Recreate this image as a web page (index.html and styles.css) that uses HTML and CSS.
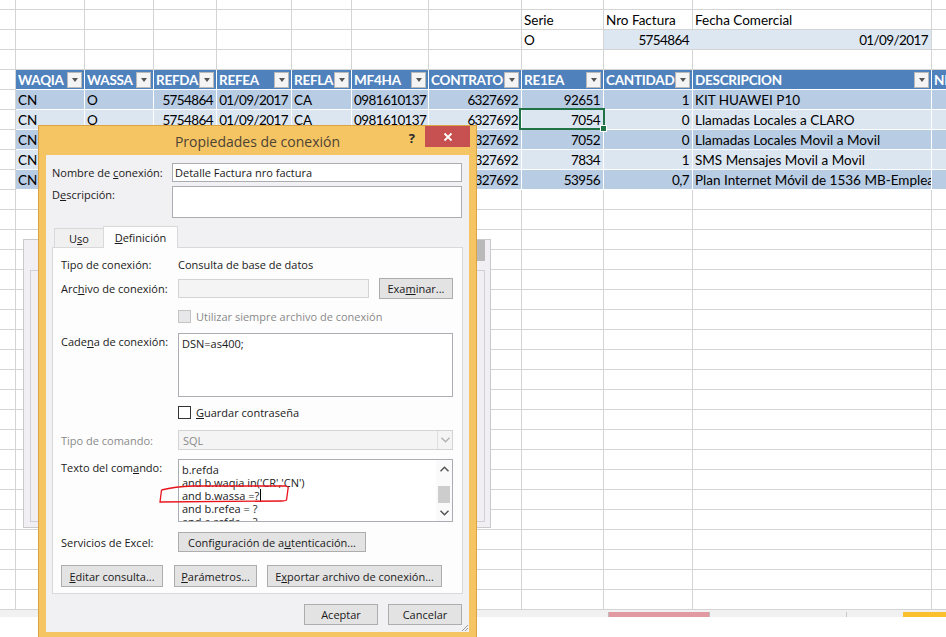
FILE: index.html
```html
<!DOCTYPE html>
<html lang="es">
<head>
<meta charset="utf-8">
<title>Propiedades de conexión</title>
<link rel="stylesheet" href="styles.css">
</head>
<body>
<div class="sheet">
  <div class="row top"><span></span><span></span><span></span><span></span><span></span><span></span><span></span><span></span><span></span><span></span><span></span><span></span></div>
  <div class="row"><span></span><span></span><span></span><span></span><span></span><span></span><span></span><span></span><span>Serie</span><span>Nro Factura</span><span>Fecha Comercial</span><span></span></div>
  <div class="row"><span></span><span></span><span></span><span></span><span></span><span></span><span></span><span></span><span>O</span><span class="n sh">5754864</span><span class="n sh">01/09/2017</span><span></span></div>
  <div class="row"><span></span><span></span><span></span><span></span><span></span><span></span><span></span><span></span><span></span><span></span><span></span><span></span></div>
  <div class="row hdr"><span></span><span><b>WAQIA</b><i class="fb"></i></span><span><b>WASSA</b><i class="fb"></i></span><span><b>REFDA</b><i class="fb"></i></span><span><b>REFEA</b><i class="fb"></i></span><span><b>REFLA</b><i class="fb"></i></span><span><b>MF4HA</b><i class="fb"></i></span><span><b>CONTRATO</b><i class="fb"></i></span><span><b>RE1EA</b><i class="fb"></i></span><span><b>CANTIDAD</b><i class="fb"></i></span><span><b>DESCRIPCION</b><i class="fb"></i></span><span><b>NRO</b></span></div>
  <div class="row d1"><span></span><span>CN</span><span>O</span><span class="n">5754864</span><span class="n">01/09/2017</span><span>CA</span><span class="t">0981610137</span><span class="n">6327692</span><span class="n">92651</span><span class="n">1</span><span>KIT HUAWEI P10</span><span></span></div>
  <div class="row d2"><span></span><span>CN</span><span>O</span><span class="n">5754864</span><span class="n">01/09/2017</span><span>CA</span><span class="t">0981610137</span><span class="n">6327692</span><span class="n">7054</span><span class="n">0</span><span>Llamadas Locales a CLARO</span><span></span></div>
  <div class="row d1"><span></span><span>CN</span><span>O</span><span class="n">5754864</span><span class="n">01/09/2017</span><span>CA</span><span class="t">0981610137</span><span class="n">6327692</span><span class="n">7052</span><span class="n">0</span><span>Llamadas Locales Movil a Movil</span><span></span></div>
  <div class="row d2"><span></span><span>CN</span><span>O</span><span class="n">5754864</span><span class="n">01/09/2017</span><span>CA</span><span class="t">0981610137</span><span class="n">6327692</span><span class="n">7834</span><span class="n">1</span><span>SMS Mensajes Movil a Movil</span><span></span></div>
  <div class="row d1"><span></span><span>CN</span><span>O</span><span class="n">5754864</span><span class="n">01/09/2017</span><span>CA</span><span class="t">0981610137</span><span class="n">6327692</span><span class="n">53956</span><span class="n">0,7</span><span>Plan Internet Móvil de 1536 MB-Empleados</span><span></span></div>
  <div class="row"><span></span><span></span><span></span><span></span><span></span><span></span><span></span><span></span><span></span><span></span><span></span><span></span></div>
  <div class="row"><span></span><span></span><span></span><span></span><span></span><span></span><span></span><span></span><span></span><span></span><span></span><span></span></div>
  <div class="row"><span></span><span></span><span></span><span></span><span></span><span></span><span></span><span></span><span></span><span></span><span></span><span></span></div>
  <div class="row"><span></span><span></span><span></span><span></span><span></span><span></span><span></span><span></span><span></span><span></span><span></span><span></span></div>
  <div class="row"><span></span><span></span><span></span><span></span><span></span><span></span><span></span><span></span><span></span><span></span><span></span><span></span></div>
  <div class="row"><span></span><span></span><span></span><span></span><span></span><span></span><span></span><span></span><span></span><span></span><span></span><span></span></div>
  <div class="row"><span></span><span></span><span></span><span></span><span></span><span></span><span></span><span></span><span></span><span></span><span></span><span></span></div>
  <div class="row"><span></span><span></span><span></span><span></span><span></span><span></span><span></span><span></span><span></span><span></span><span></span><span></span></div>
  <div class="row"><span></span><span></span><span></span><span></span><span></span><span></span><span></span><span></span><span></span><span></span><span></span><span></span></div>
  <div class="row"><span></span><span></span><span></span><span></span><span></span><span></span><span></span><span></span><span></span><span></span><span></span><span></span></div>
  <div class="row"><span></span><span></span><span></span><span></span><span></span><span></span><span></span><span></span><span></span><span></span><span></span><span></span></div>
  <div class="row"><span></span><span></span><span></span><span></span><span></span><span></span><span></span><span></span><span></span><span></span><span></span><span></span></div>
  <div class="row"><span></span><span></span><span></span><span></span><span></span><span></span><span></span><span></span><span></span><span></span><span></span><span></span></div>
  <div class="row"><span></span><span></span><span></span><span></span><span></span><span></span><span></span><span></span><span></span><span></span><span></span><span></span></div>
  <div class="row"><span></span><span></span><span></span><span></span><span></span><span></span><span></span><span></span><span></span><span></span><span></span><span></span></div>
  <div class="row"><span></span><span></span><span></span><span></span><span></span><span></span><span></span><span></span><span></span><span></span><span></span><span></span></div>
  <div class="row"><span></span><span></span><span></span><span></span><span></span><span></span><span></span><span></span><span></span><span></span><span></span><span></span></div>
  <div class="row"><span></span><span></span><span></span><span></span><span></span><span></span><span></span><span></span><span></span><span></span><span></span><span></span></div>
  <div class="row"><span></span><span></span><span></span><span></span><span></span><span></span><span></span><span></span><span></span><span></span><span></span><span></span></div>
  <div class="row"><span></span><span></span><span></span><span></span><span></span><span></span><span></span><span></span><span></span><span></span><span></span><span></span></div>
  <div class="row"><span></span><span></span><span></span><span></span><span></span><span></span><span></span><span></span><span></span><span></span><span></span><span></span></div>
</div>
<div class="tabbar"><span class="sheet-tab"></span><span class="tick"></span><span class="scroll-end"></span></div>

<div class="selection"><span class="handle"></span></div>

<div class="ghost"><span class="ghost-thumb"></span><div class="ghost-inner"></div></div>

<div class="dialog">
  <div class="titlebar">
    <span></span>
    <span class="title">Propiedades de conexión</span>
    <span class="caption-btns">
      <span class="help">?</span>
      <span class="close"><svg width="10" height="10" viewBox="0 0 10 10"><path d="M1.5 1.5L8.5 8.5M8.5 1.5L1.5 8.5" stroke="#fff" stroke-width="1.8" fill="none"/></svg></span>
    </span>
  </div>
  <div class="client">
    <div class="frow name-row"><span class="flbl">Nombre de <u>c</u>onexión:</span><span class="box name-box">Detalle Factura nro factura</span></div>
    <div class="frow desc-row"><span class="flbl">D<u>e</u>scripción:</span><span class="box desc-box"></span></div>
    <div class="tabs"><span class="tab">U<u>s</u>o</span><span class="tab active"><u>D</u>efinición</span></div>
    <div class="panel">
      <div class="prow r1"><span class="lbl">Tipo de conexión:</span><span>Consulta de base de datos</span></div>
      <div class="prow r2"><span class="lbl">Arc<u>h</u>ivo de conexión:</span><span class="box file-box dis"></span><span class="btn browse">Exa<u>m</u>inar...</span></div>
      <div class="prow r3"><span class="lbl"></span><span class="chk dis"></span><span class="muted">Utilizar siempre archivo de conexión</span></div>
      <div class="prow r4"><span class="lbl top">Cade<u>n</u>a de conexión:</span><div class="box area conn">DSN=as400;</div></div>
      <div class="prow r5"><span class="lbl"></span><span class="chk"></span><span><u>G</u>uardar contraseña</span></div>
      <div class="prow r6"><span class="lbl muted">Tipo de comando:</span><div class="box select dis"><span class="muted sel-text">SQL</span><span class="sel-arrow"><svg width="9" height="6" viewBox="0 0 9 6"><path d="M0.5 0.8L4.5 4.8L8.5 0.8" stroke="#b0b0b0" stroke-width="1.3" fill="none"/></svg></span></div></div>
      <div class="prow r7"><span class="lbl top">Texto del com<u>a</u>ndo:</span>
        <div class="box area cmd">
          <div class="cmd-text">
            <div>b.refda</div>
            <div>and b.waqia in('CR','CN')</div>
            <div>and b.wassa =?<span class="caret"></span></div>
            <div>and b.refea = ?</div>
            <div>and a.refda = ?</div>
          </div>
          <div class="vscroll">
            <span class="arrow"><svg width="9" height="6" viewBox="0 0 9 6"><path d="M0.5 5.2L4.5 1.2L8.5 5.2" stroke="#505050" stroke-width="1.4" fill="none"/></svg></span>
            <span class="thumb"></span>
            <span class="arrow down"><svg width="9" height="6" viewBox="0 0 9 6"><path d="M0.5 0.8L4.5 4.8L8.5 0.8" stroke="#505050" stroke-width="1.4" fill="none"/></svg></span>
          </div>
        </div>
      </div>
      <div class="prow r8"><span class="lbl">Servicios de Excel:</span><span class="btn auth">Configuración de a<u>u</u>tenticación...</span></div>
      <div class="prow r9"><span class="btn edit"><u>E</u>ditar consulta...</span><span class="btn params"><u>P</u>arámetros...</span><span class="btn export">E<u>x</u>portar archivo de conexión...</span></div>
    </div>
    <div class="footer"><span class="btn ok">Aceptar</span><span class="btn ok">Cancelar</span></div>
    <svg class="grip" width="8" height="8" viewBox="0 0 8 8"><path d="M7 1L1 7M7 4L4 7" stroke="#9a9a9a" stroke-width="1" fill="none"/></svg>
  </div>
</div>

<svg class="mark" width="140" height="26" viewBox="0 0 140 26"><path d="M6.5 10 Q20 6.5 38 6 L131 6 Q134 7 133 9 L131.5 20 Q130 21 127 21 L5 22 L6.5 10" stroke="#e8141c" stroke-width="1.3" fill="none"/></svg>
</body>
</html>
```

FILE: styles.css
```css
html, body { margin: 0; padding: 0; }
body {
  width: 946px;
  height: 637px;
  overflow: hidden;
  position: relative;
  background: #fff;
  font-family: Lato, "Liberation Sans", sans-serif;
  font-size: 13.5px;
  color: #000;
}

/* ---------- spreadsheet ---------- */
.sheet { display: flex; flex-direction: column; }
.row { display: flex; height: 20px; }
.row.top { height: 10px; }
.row > span {
  box-sizing: border-box;
  flex: none;
  height: 100%;
  border-right: 1px solid #d4d4d4;
  border-bottom: 1px solid #d4d4d4;
  padding: 1px 2px 0 2px;
  line-height: 19px;
  white-space: nowrap;
  overflow: hidden;
}
.row.top > span { padding: 0; }
.row > span:nth-child(1) { width: 16px; }
.row > span:nth-child(2) { width: 69px; }
.row > span:nth-child(3) { width: 69px; }
.row > span:nth-child(4) { width: 63px; }
.row > span:nth-child(5) { width: 75px; }
.row > span:nth-child(6) { width: 60px; }
.row > span:nth-child(7) { width: 77px; }
.row > span:nth-child(8) { width: 93px; }
.row > span:nth-child(9) { width: 82px; }
.row > span:nth-child(10) { width: 89px; }
.row > span:nth-child(11) { width: 239px; }
.row > span:nth-child(12) { width: 30px; }
.row > span.n { text-align: right; letter-spacing: -0.6px; padding-right: 3px; }
.row > span.t { letter-spacing: -0.6px; }
.row > span.sh { background: #dde7f2; }
.row > span:nth-child(10).sh { border-right-color: #dde7f2; }

.hdr > span + span {
  background: #4f81bd;
  border-color: #fff;
  color: #fff;
  display: flex;
  align-items: center;
  padding-top: 0;
}
.hdr b { flex: 1 1 auto; overflow: hidden; font-weight: bold; letter-spacing: -0.25px; padding-top: 2px; }
.fb {
  flex: none;
  box-sizing: border-box;
  width: 15px;
  height: 16px;
  background: #f4f4f4;
  border: 1px solid #b9b9b9;
  display: flex;
  align-items: center;
  justify-content: center;
}
.fb::after {
  content: "";
  border-left: 3.5px solid transparent;
  border-right: 3.5px solid transparent;
  border-top: 4px solid #555;
  margin-top: 1px;
}
.d1 > span + span { background: #b8cce4; border-color: #fff; }
.d2 > span + span { background: #dce6f1; border-color: #fff; }

.tabbar {
  display: flex;
  height: 7px;
  background: #f1f1f1;
  align-items: flex-end;
}
.sheet-tab {
  margin-left: 608px;
  width: 100px;
  height: 5px;
  background: #e29aa2;
  border-left: 1px solid #bdbdbd;
  border-right: 1px solid #bdbdbd;
}
.tick { margin-left: 136px; width: 1px; height: 5px; background: #c8c8c8; }
.scroll-end { margin-left: auto; width: 43px; height: 5px; background: #fbc02d; }

.selection {
  position: absolute;
  left: 519px;
  top: 108px;
  width: 86px;
  height: 22px;
  box-sizing: border-box;
  border: 2px solid #217346;
}
.handle {
  position: absolute;
  right: -4px;
  bottom: -4px;
  width: 5px;
  height: 5px;
  background: #217346;
  border: 1px solid #fff;
}

/* ghost window behind the dialog */
.ghost {
  position: absolute;
  left: 23px;
  top: 239px;
  width: 468px;
  height: 289px;
  box-sizing: border-box;
  border: 1px solid #cacaca;
  background: #f1eff4;
  padding: 30px 0 0 6px;
}
.ghost-inner {
  box-sizing: border-box;
  width: 455px;
  height: 252px;
  border: 1px solid #cfd0d6;
}
.ghost-thumb {
  position: absolute;
  left: 453px;
  top: 0;
  width: 8px;
  height: 21px;
  background: #b9b9b9;
}

/* ---------- dialog ---------- */
.dialog {
  position: absolute;
  left: 38px;
  top: 125px;
  width: 439px;
  box-sizing: border-box;
  background: #f5c564;
  border: 1px solid #d9a441;
  border-bottom: none;
  padding-bottom: 8px;
  font-family: "Open Sans", "Noto Sans", sans-serif;
  font-size: 11px;
  color: #1a1a1a;
}
.titlebar {
  display: grid;
  grid-template-columns: 1fr auto 1fr;
  height: 29px;
}
.title {
  align-self: center;
  font-size: 14px;
  color: #4d4333;
  padding-top: 1px;
}
.caption-btns {
  display: flex;
  justify-content: flex-end;
  align-items: flex-start;
}
.help {
  font-weight: bold;
  font-size: 13px;
  line-height: 14px;
  margin-top: 5px;
  margin-right: 10px;
  color: #2a2a2a;
}
.close {
  width: 45px;
  height: 21px;
  background: #c75050;
  display: flex;
  align-items: center;
  justify-content: center;
  margin-right: 6px;
}
.client {
  position: relative;
  margin: 0 7px;
  background: #f1f0f3;
  padding: 8px 6px 7px 6px;
}
u { text-decoration: underline; text-underline-offset: 1px; }

.frow { display: flex; align-items: center; }
.flbl { width: 120px; flex: none; line-height: 15px; }
.box {
  box-sizing: border-box;
  background: #fff;
  border: 1px solid #abadb3;
}
.name-box { width: 290px; height: 19px; padding-left: 2px; line-height: 17px; }
.desc-row { margin-top: 4px; align-items: flex-start; }
.desc-row .flbl { padding-top: 1px; }
.desc-box { width: 290px; height: 32px; }

.tabs {
  display: flex;
  align-items: flex-end;
  height: 21px;
  margin-top: 8px;
  padding-left: 2px;
}
.tab {
  box-sizing: border-box;
  width: 50px;
  height: 19px;
  border: 1px solid #d9d9d9;
  border-bottom: none;
  background: #f0f0f0;
  text-align: center;
  line-height: 19px;
}
.tab.active {
  width: 75px;
  height: 22px;
  margin-left: -1px;
  margin-bottom: -1px;
  background: #fdfdfd;
  position: relative;
  z-index: 1;
  line-height: 21px;
}
.panel {
  border: 1px solid #d9d9d9;
  background: #fdfdfd;
  padding: 8px 9px 6px 8px;
}
.prow { display: flex; align-items: center; }
.lbl { width: 117px; flex: none; }
.lbl.top { align-self: flex-start; padding-top: 1px; }
.muted { color: #8a8a8a; }
.r1 { height: 16px; }
.r2 { height: 21px; margin-top: 6px; }
.r3 { height: 13px; margin-top: 11px; }
.r4 { height: 64px; margin-top: 10px; align-items: flex-start; }
.r5 { height: 13px; margin-top: 9px; }
.r6 { height: 20px; margin-top: 11px; }
.r7 { height: 63px; margin-top: 9px; align-items: flex-start; }
.r8 { height: 20px; margin-top: 10px; }
.r9 { height: 22px; margin-top: 13px; gap: 10px; }

.btn {
  box-sizing: border-box;
  display: flex;
  align-items: center;
  justify-content: center;
  background: #e3e3e3;
  border: 1px solid #adadad;
  height: 21px;
  flex: none;
}
.file-box { width: 191px; height: 19px; }
.box.dis { background: #f4f4f4; border-color: #d3d3d3; }
.browse { width: 74px; margin-left: 10px; }
.chk {
  box-sizing: border-box;
  width: 13px;
  height: 13px;
  border: 1px solid #333;
  background: #fff;
  margin-right: 5px;
  flex: none;
}
.chk.dis { border-color: #c4c4c4; background: #e7e7ea; }
.area { width: 275px; height: 64px; padding: 2px 3px; line-height: 13px; }
.conn { padding-top: 3px; }
.select {
  width: 275px;
  height: 20px;
  display: flex;
  align-items: center;
}
.sel-text { flex: 1; padding-left: 4px; }
.sel-arrow {
  width: 14px;
  height: 100%;
  border-left: 1px solid #e0e0e0;
  display: flex;
  align-items: center;
  justify-content: center;
}
.cmd {
  height: 63px;
  padding: 0;
  display: flex;
  overflow: hidden;
}
.cmd-text {
  flex: 1;
  padding: 3px 0 0 3px;
  line-height: 13px;
  white-space: nowrap;
  overflow: hidden;
}
.caret {
  display: inline-block;
  width: 1px;
  height: 13px;
  background: #000;
  vertical-align: -2px;
  margin-left: 1px;
}
.vscroll {
  width: 16px;
  flex: none;
  display: flex;
  flex-direction: column;
  align-items: center;
  background: #fafafa;
}
.arrow {
  height: 17px;
  width: 16px;
  display: flex;
  align-items: center;
  justify-content: center;
}
.arrow.down { margin-top: auto; }
.thumb {
  width: 12px;
  height: 17px;
  margin-top: 9px;
  background: #cdcdcd;
}
.auth { width: 188px; height: 20px; }
.r9 .btn { height: 22px; }
.edit { width: 102px; }
.params { width: 83px; margin-left: 1px; }
.export { width: 175px; }

.footer {
  display: flex;
  justify-content: flex-end;
  gap: 10px;
  margin-top: 10px;
  padding-right: 1px;
}
.ok { width: 74px; }
.grip { position: absolute; right: 0; bottom: 0; }

.mark { position: absolute; left: 155px; top: 480px; }
```
